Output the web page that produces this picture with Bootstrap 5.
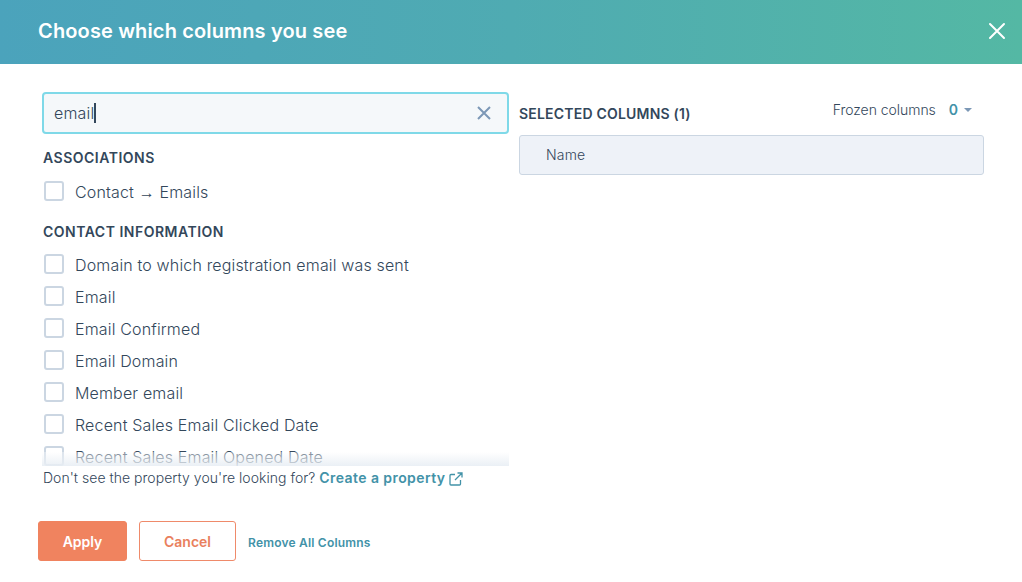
<!DOCTYPE html>
<html lang="en">
<head>
<meta charset="utf-8">
<title>Choose which columns you see</title>
<link href="https://cdn.jsdelivr.net/npm/bootstrap@5.3.0/dist/css/bootstrap.min.css" rel="stylesheet">
<style>
html,body{height:582px;overflow:hidden;background:#fff}
body{font-family:Inter,"Liberation Sans",sans-serif;color:#33475b;font-size:16px;font-weight:300;line-height:24px;letter-spacing:.16px}
.hs-head{height:64px;background:linear-gradient(90deg,#4ba3bc 0%,#4fabb2 50%,#54b8a4 100%);padding:0 16px 0 38px}
.hs-title{font-size:20px;font-weight:600;color:#fff;margin:0 0 3px;line-height:1;letter-spacing:.14px}
.hs-close{background:none;border:0;padding:0;width:18px;height:18px;display:flex;margin-bottom:3px}
.hs-body{padding:28px 38px 0 42px;gap:10px}
.hs-left{width:467px;flex:none}
.hs-right{width:465px;flex:none}
.hs-search{height:42px;border:2px solid #7fd9e8;border-radius:4px;background:#f5f8fa;padding:0 16px 0 10px;font-size:16px;color:#33475b}
.hs-caret{display:inline-block;width:2px;height:20px;background:#33475b}
.hs-sec{font-size:14px;font-weight:600;letter-spacing:.5px;color:#33475b;line-height:18px;margin:0;padding-left:1px;text-transform:uppercase}
.hs-first{margin-top:15px;margin-bottom:9px}
.hs-second{margin-top:15px;margin-bottom:8px}
.hs-list{height:332px;position:relative;overflow:hidden}
.hs-fade{position:absolute;left:0;right:0;bottom:0;height:14px;background:linear-gradient(180deg,rgba(255,255,255,.35),rgba(232,238,244,.9))}
.hs-opt{height:32px;gap:11px;padding-left:2px;white-space:nowrap}
.hs-box{width:20px;height:20px;border:2px solid #cbd6e2;border-radius:3px;background:#fff;flex:none;margin-top:-3px}
.hs-arrow{font-family:"Liberation Sans",sans-serif;font-weight:400}
.hs-note{font-size:14px;line-height:20px;padding-left:1px;margin-top:2px;letter-spacing:.03px}
.hs-link{color:#4292a8;font-weight:600;text-decoration:none;letter-spacing:.42px}
.hs-frozen{font-size:14px;color:#33475b;height:24px;margin-top:6px;letter-spacing:-.04px}
.hs-zero{color:#4292a8;font-weight:600;margin-left:13px}
.hs-tri{width:0;height:0;border:4px solid transparent;border-top-color:#7c98b6;border-bottom:0;margin-left:6px;margin-right:12px}
.hs-seltitle{margin-top:13px;letter-spacing:.2px}
.hs-name{height:40px;margin-top:12px;background:#eef2f8;border:1px solid #cbd6e2;border-radius:3px;padding-left:26px;font-size:14px;color:#33475b}
.hs-foot{padding:0 0 0 38px;margin-top:33px;gap:12px}
.hs-btn{height:40px;border-radius:3px;font-size:14px;font-weight:600;padding:2px 0 0;display:flex;align-items:center;justify-content:center}
.hs-apply{width:89px;background:#f0835f;border:1px solid #f0835f;color:#fff}
.hs-cancel{width:97px;background:#fff;border:1px solid #ef8a6a;color:#e9805d}
.hs-remove{font-size:12px;font-weight:600;color:#4292a8;text-decoration:none;letter-spacing:.2px;margin-top:3px}
</style>
</head>
<body>
<header class="hs-head d-flex align-items-center justify-content-between">
  <h1 class="hs-title">Choose which columns you see</h1>
  <button class="hs-close" type="button" aria-label="Close"><svg width="18" height="18" viewBox="0 0 18 18"><path d="M2 2l14 14M16 2L2 16" stroke="#fff" stroke-width="2" stroke-linecap="round" fill="none"/></svg></button>
</header>
<main class="hs-body d-flex">
  <section class="hs-left">
    <div class="hs-search d-flex align-items-center">
      <span>email</span><span class="hs-caret"></span>
      <svg class="ms-auto" width="14" height="14" viewBox="0 0 14 14"><path d="M1 1l12 12M13 1L1 13" stroke="#7c98b6" stroke-width="2" fill="none"/></svg>
    </div>
    <div class="hs-list">
      <h2 class="hs-sec hs-first">Associations</h2>
      <div class="hs-opt d-flex align-items-center"><span class="hs-box"></span><span>Contact <span class="hs-arrow">→</span> Emails</span></div>
      <h2 class="hs-sec hs-second">Contact information</h2>
      <div class="hs-opt d-flex align-items-center"><span class="hs-box"></span><span>Domain to which registration email was sent</span></div>
      <div class="hs-opt d-flex align-items-center"><span class="hs-box"></span><span>Email</span></div>
      <div class="hs-opt d-flex align-items-center"><span class="hs-box"></span><span>Email Confirmed</span></div>
      <div class="hs-opt d-flex align-items-center"><span class="hs-box"></span><span>Email Domain</span></div>
      <div class="hs-opt d-flex align-items-center"><span class="hs-box"></span><span>Member email</span></div>
      <div class="hs-opt d-flex align-items-center"><span class="hs-box"></span><span>Recent Sales Email Clicked Date</span></div>
      <div class="hs-opt d-flex align-items-center"><span class="hs-box"></span><span>Recent Sales Email Opened Date</span></div>
      <div class="hs-fade"></div>
    </div>
    <p class="hs-note mb-0">Don't see the property you're looking for? <a class="hs-link" href="#">Create a property</a>
      <svg width="14" height="14" viewBox="0 0 14 14"><path d="M6 2.500H2a1 1 0 0 0-1 1V12a1 1 0 0 0 1 1h8.500a1 1 0 0 0 1-1V8M8.500 1H13v4.500M13 1L6 8" stroke="#4292a8" stroke-width="1.300" fill="none"/></svg></p>
  </section>
  <section class="hs-right">
    <div class="d-flex justify-content-between align-items-start">
      <h2 class="hs-sec hs-seltitle ps-0">Selected columns (1)</h2>
      <div class="hs-frozen d-flex align-items-center"><span>Frozen columns</span><span class="hs-zero">0</span><span class="hs-tri"></span></div>
    </div>
    <div class="hs-name d-flex align-items-center">Name</div>
  </section>
</main>
<footer class="hs-foot d-flex align-items-center">
  <button class="hs-btn hs-apply" type="button">Apply</button>
  <button class="hs-btn hs-cancel" type="button">Cancel</button>
  <a class="hs-remove" href="#">Remove All Columns</a>
</footer>
</body>
</html>
